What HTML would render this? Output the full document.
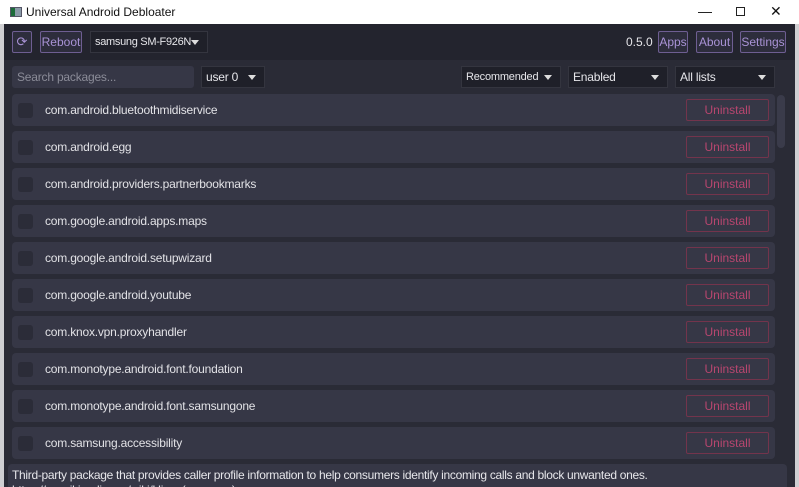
<!DOCTYPE html>
<html><head><style>
*{margin:0;padding:0;box-sizing:border-box}
html,body{width:799px;height:487px;overflow:hidden}
body{background:#cfcfd2;font-family:"Liberation Sans",sans-serif;position:relative}
.title{position:absolute;left:0;top:0;width:799px;height:24px;background:#fff;font-size:12px;color:#111}
.title .t{position:absolute;left:26px;top:5px}
.win{position:absolute;left:4px;top:24px;width:791px;height:463px;background:#2a2b36;overflow:hidden}
.top{position:absolute;left:0;top:0;width:791px;height:36px;background:#23242e}
.btn{position:absolute;border:1px solid #6e5e92;color:#a993d6;font-size:12px;height:22px;line-height:20px;text-align:center;background:#2d2d3c;border-radius:2px}
.sel{position:absolute;background:#1f2029;border:1px solid #34353f;color:#e6e6ea;font-size:12px;height:22px;line-height:20px;padding-left:4px;letter-spacing:-0.2px;white-space:nowrap}
.sel.c:after{content:"";position:absolute;right:8px;top:8px;border-left:4px solid transparent;border-right:4px solid transparent;border-top:5px solid #ddd}
.row{position:absolute;left:8px;width:763px;height:32px;background:#363746;border-radius:4px}
.cb{position:absolute;left:6px;top:9px;width:15px;height:15px;background:#2b2c38;border-radius:3px}
.row .n{position:absolute;left:33px;top:9px;font-size:12px;color:#e2e2e6;letter-spacing:-0.2px}
.un{position:absolute;left:674px;top:5px;width:83px;height:22px;border:1px solid #73344c;color:#b8466f;font-size:12px;line-height:20px;text-align:center;border-radius:2px}
</style></head><body>
<div class="title"><div style="position:absolute;left:10px;top:7px;width:12px;height:10px;background:#8a9aa8;border:1px solid #556"></div><div style="position:absolute;left:11px;top:8px;width:4px;height:8px;background:#1c6b3a"></div><span class="t">Universal Android Debloater</span>
<span style="position:absolute;left:698px;top:3px;font-size:14px">—</span>
<div style="position:absolute;left:736px;top:7px;width:9px;height:9px;border:1px solid #222"></div>
<span style="position:absolute;left:770px;top:3px;font-size:14px">✕</span></div>
<div class="win">
<div class="top">
<div class="btn" style="left:8px;top:7px;width:20px;font-size:13px;line-height:19px">⟳</div>
<div class="btn" style="left:36px;top:7px;width:42px">Reboot</div>
<div class="sel c" style="left:86px;top:7px;width:118px;font-size:11px;letter-spacing:-0.3px">samsung SM-F926N</div>
<span style="position:absolute;left:622px;top:11px;font-size:12px;color:#e6e6ea">0.5.0</span>
<div class="btn" style="left:654px;top:7px;width:30px">Apps</div>
<div class="btn" style="left:692px;top:7px;width:37px">About</div>
<div class="btn" style="left:736px;top:7px;width:46px">Settings</div>
</div>
<div class="sel" style="left:8px;top:42px;width:182px;background:#363746;border-color:#363746;color:#8b8c98;border-radius:3px">Search packages...</div>
<div class="sel c" style="left:197px;top:42px;width:64px">user 0</div>
<div class="sel c" style="left:457px;top:42px;width:100px;font-size:11px;letter-spacing:-0.2px">Recommended</div>
<div class="sel c" style="left:564px;top:42px;width:100px">Enabled</div>
<div class="sel c" style="left:671px;top:42px;width:100px">All lists</div>
<div style="position:absolute;left:773px;top:71px;width:8px;height:53px;background:#3a3b4a;border-radius:4px"></div>
<div class="row" style="top:70px"><div class="cb"></div><span class="n">com.android.bluetoothmidiservice</span><div class="un">Uninstall</div></div>
<div class="row" style="top:107px"><div class="cb"></div><span class="n">com.android.egg</span><div class="un">Uninstall</div></div>
<div class="row" style="top:144px"><div class="cb"></div><span class="n">com.android.providers.partnerbookmarks</span><div class="un">Uninstall</div></div>
<div class="row" style="top:181px"><div class="cb"></div><span class="n">com.google.android.apps.maps</span><div class="un">Uninstall</div></div>
<div class="row" style="top:218px"><div class="cb"></div><span class="n">com.google.android.setupwizard</span><div class="un">Uninstall</div></div>
<div class="row" style="top:255px"><div class="cb"></div><span class="n">com.google.android.youtube</span><div class="un">Uninstall</div></div>
<div class="row" style="top:292px"><div class="cb"></div><span class="n">com.knox.vpn.proxyhandler</span><div class="un">Uninstall</div></div>
<div class="row" style="top:329px"><div class="cb"></div><span class="n">com.monotype.android.font.foundation</span><div class="un">Uninstall</div></div>
<div class="row" style="top:366px"><div class="cb"></div><span class="n">com.monotype.android.font.samsungone</span><div class="un">Uninstall</div></div>
<div class="row" style="top:403px"><div class="cb"></div><span class="n">com.samsung.accessibility</span><div class="un">Uninstall</div></div>
<div style="position:absolute;left:4px;top:440px;width:779px;height:30px;background:#363746;border-radius:4px;color:#e6e6ea;font-size:12px;padding:4px 4px;line-height:15px;letter-spacing:-0.3px">Third-party package that provides caller profile information to help consumers identify incoming calls and block unwanted ones.<br>https://en.wikipedia.org/wiki/Hiya_(company)</div>
</div>
</body></html>
